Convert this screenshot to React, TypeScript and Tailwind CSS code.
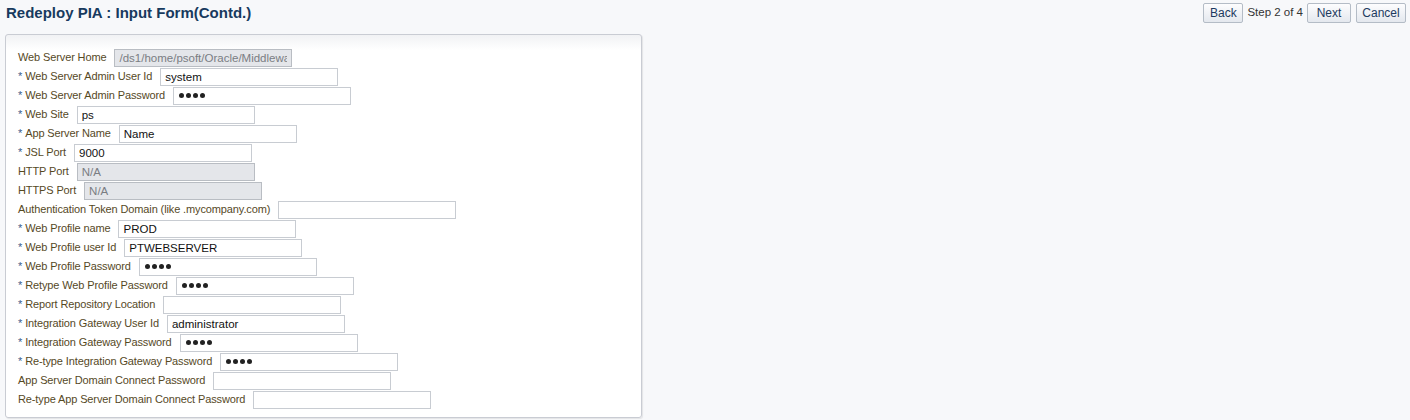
import React from 'react';

type Field = {
  label: string;
  required?: boolean;
  value?: string;
  password?: boolean;
  disabled?: boolean;
};

const fields: Field[] = [
  { label: 'Web Server Home', value: '/ds1/home/psoft/Oracle/Middleware', disabled: true },
  { label: 'Web Server Admin User Id', required: true, value: 'system' },
  { label: 'Web Server Admin Password', required: true, value: 'pass', password: true },
  { label: 'Web Site', required: true, value: 'ps' },
  { label: 'App Server Name', required: true, value: 'Name' },
  { label: 'JSL Port', required: true, value: '9000' },
  { label: 'HTTP Port', value: 'N/A', disabled: true },
  { label: 'HTTPS Port', value: 'N/A', disabled: true },
  { label: 'Authentication Token Domain (like .mycompany.com)', value: '' },
  { label: 'Web Profile name', required: true, value: 'PROD' },
  { label: 'Web Profile user Id', required: true, value: 'PTWEBSERVER' },
  { label: 'Web Profile Password', required: true, value: 'pass', password: true },
  { label: 'Retype Web Profile Password', required: true, value: 'pass', password: true },
  { label: 'Report Repository Location', required: true, value: '' },
  { label: 'Integration Gateway User Id', required: true, value: 'administrator' },
  { label: 'Integration Gateway Password', required: true, value: 'pass', password: true },
  { label: 'Re-type Integration Gateway Password', required: true, value: 'pass', password: true },
  { label: 'App Server Domain Connect Password', value: '' },
  { label: 'Re-type App Server Domain Connect Password', value: '' },
];

const Button: React.FC<{ children: React.ReactNode; className?: string }> = ({ children, className }) => (
  <button
    className={
      'h-[20px] rounded-[2px] border border-[#b4bcc6] bg-gradient-to-b from-[#fdfdfe] to-[#e4e8ee] text-[12px] leading-none text-[#1c3a60] ' +
      (className ?? '')
    }
  >
    {children}
  </button>
);

const FormRow: React.FC<{ field: Field }> = ({ field }) => (
  <div className="flex h-[19px] items-center">
    <label className="whitespace-nowrap tracking-[-0.12px] text-[#56491f]">
      {field.required && <span className="mr-[3px] text-[#3b5b8a]">*</span>}
      {field.label}
    </label>
    {field.password ? (
      <div className="ml-[8px] flex h-[18px] w-[178px] items-center gap-[2px] border border-[#c8ccd2] bg-white pl-[5px]">
        {[0, 1, 2, 3].map((i) => (
          <span key={i} className="h-[5px] w-[5px] rounded-full bg-[#222]" />
        ))}
      </div>
    ) : (
      <input
        readOnly
        value={field.value}
        className={
          field.disabled
            ? 'ml-[8px] h-[18px] w-[178px] overflow-hidden border border-[#b9bdc3] bg-[#e4e6ea] px-[4px] text-[11.5px] text-[#7a7d83] outline-none'
            : 'ml-[8px] h-[18px] w-[178px] border border-[#c8ccd2] bg-white px-[4px] text-[11.5px] text-[#111] outline-none'
        }
      />
    )}
  </div>
);

const App: React.FC = () => {
  return (
    <div className="min-h-[420px] bg-[#f7f8fa] font-['Liberation_Sans',Arial,sans-serif] text-[11px]">
      <div className="flex items-start justify-between pl-[6px] pr-[4px] pt-[3px]">
        <h1 className="text-[15px] font-bold leading-[19px] text-[#173a5e]">
          Redeploy PIA : Input Form(Contd.)
        </h1>
        <div className="flex items-center">
          <Button className="w-[40px]">Back</Button>
          <span className="mx-[4px] text-[11.5px] text-[#333]">Step 2 of 4</span>
          <Button className="w-[44px]">Next</Button>
          <Button className="ml-[5px] w-[50px]">Cancel</Button>
        </div>
      </div>

      <div className="ml-[5px] mt-[11px] w-[637px] rounded-[3px] border border-[#c9ccd3] bg-gradient-to-b from-[#f1f2f4] to-white to-[4%] pb-[8px] pl-[12px] pt-[13px] shadow-[1px_1px_1px_rgba(0,0,0,0.08)]">
        {fields.map((f) => (
          <FormRow key={f.label} field={f} />
        ))}
      </div>
    </div>
  );
};

export default App;
